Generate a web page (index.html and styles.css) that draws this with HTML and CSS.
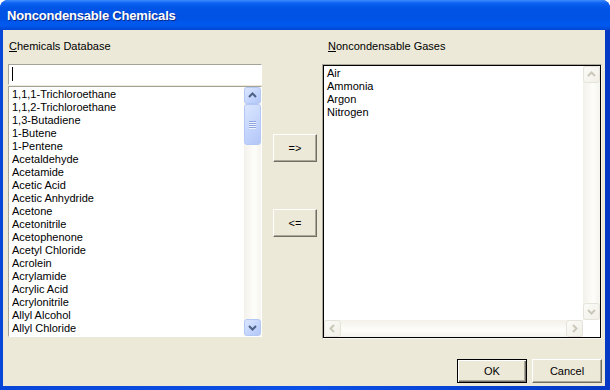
FILE: index.html
```html
<!DOCTYPE html>
<html lang="en">
<head>
    <meta charset="UTF-8" />
    <title>Noncondensable Chemicals</title>
    <link rel="stylesheet" href="styles.css">
</head>
<body>
    <div class="window">
        <div class="titlebar">
            <span class="title">Noncondensable Chemicals</span>
        </div>
        <div class="client">
            <div class="panes">
                <div class="pane left">
                    <div class="caption"><u>C</u>hemicals Database</div>
                    <div class="edit"><span class="caret"></span></div>
                    <div class="listbox">
                        <ul class="items">
                            <li>1,1,1-Trichloroethane</li>
                            <li>1,1,2-Trichloroethane</li>
                            <li>1,3-Butadiene</li>
                            <li>1-Butene</li>
                            <li>1-Pentene</li>
                            <li>Acetaldehyde</li>
                            <li>Acetamide</li>
                            <li>Acetic Acid</li>
                            <li>Acetic Anhydride</li>
                            <li>Acetone</li>
                            <li>Acetonitrile</li>
                            <li>Acetophenone</li>
                            <li>Acetyl Chloride</li>
                            <li>Acrolein</li>
                            <li>Acrylamide</li>
                            <li>Acrylic Acid</li>
                            <li>Acrylonitrile</li>
                            <li>Allyl Alcohol</li>
                            <li>Allyl Chloride</li>
                        </ul>
                        <div class="vscroll">
                            <div class="sbtn">
                                <svg width="15" height="15" viewBox="0 0 15 15"><path d="M4 9 L7.5 5.5 L11 9" /></svg>
                            </div>
                            <div class="sbtn thumb">
                                <span class="grip"></span>
                                <span class="grip"></span>
                                <span class="grip"></span>
                                <span class="grip"></span>
                            </div>
                            <div class="track"></div>
                            <div class="sbtn">
                                <svg width="15" height="15" viewBox="0 0 15 15"><path d="M4 6 L7.5 9.5 L11 6" /></svg>
                            </div>
                        </div>
                    </div>
                </div>
                <div class="movers">
                    <button class="btn">=&gt;</button>
                    <button class="btn">&lt;=</button>
                </div>
                <div class="pane right">
                    <div class="caption"><u>N</u>oncondensable Gases</div>
                    <div class="gasbox">
                        <div class="gasinner">
                            <ul class="items gases">
                                <li>Air</li>
                                <li>Ammonia</li>
                                <li>Argon</li>
                                <li>Nitrogen</li>
                            </ul>
                            <div class="vscroll off">
                                <div class="sbtn">
                                    <svg width="15" height="15" viewBox="0 0 15 15"><path d="M4 9 L7.5 5.5 L11 9" /></svg>
                                </div>
                                <div class="track"></div>
                                <div class="sbtn">
                                    <svg width="15" height="15" viewBox="0 0 15 15"><path d="M4 6 L7.5 9.5 L11 6" /></svg>
                                </div>
                            </div>
                            <div class="hscroll off">
                                <div class="sbtn">
                                    <svg width="15" height="15" viewBox="0 0 15 15"><path d="M9 4 L5.5 7.5 L9 11" /></svg>
                                </div>
                                <div class="track"></div>
                                <div class="sbtn">
                                    <svg width="15" height="15" viewBox="0 0 15 15"><path d="M6 4 L9.5 7.5 L6 11" /></svg>
                                </div>
                            </div>
                            <div class="corner"></div>
                        </div>
                    </div>
                </div>
            </div>
            <div class="actions">
                <button class="btn wide default">OK</button>
                <button class="btn wide">Cancel</button>
            </div>
        </div>
    </div>
</body>
</html>
```
FILE: styles.css
```css
body {
    margin: 0;
    background: #ffffff;
    font-family: "Liberation Sans", Arial, sans-serif;
    font-size: 11px;
    color: #000000;
}
.window {
    width: 610px;
    height: 390px;
    display: flex;
    flex-direction: column;
    background: linear-gradient(90deg, #0846d8, #0a4fe6 50%, #0339c4);
    border-radius: 8px 8px 0 0;
    overflow: hidden;
}
.titlebar {
    height: 30px;
    flex: none;
    box-sizing: border-box;
    padding: 8px 0 0 7px;
    background: linear-gradient(#3d8dff 0, #0d63f2 3px, #0054e6 8px, #0052e4 18px, #005af0 25px, #0046d2 30px);
}
.title {
    color: #ffffff;
    font-size: 13px;
    font-weight: bold;
    letter-spacing: -0.2px;
    line-height: 16px;
    text-shadow: 1px 1px 0 #0a2a8a;
}
.client {
    height: 356px;
    margin: 0 5px 0 3px;
    background: #ece9d8;
    box-sizing: border-box;
    padding: 9px 3px 0 5px;
    display: flex;
    flex-direction: column;
}
.panes {
    display: flex;
    height: 300px;
}
.pane {
    display: flex;
    flex-direction: column;
}
.left {
    width: 254px;
}
.right {
    width: 280px;
    margin-left: 5px;
}
.caption {
    height: 13px;
    line-height: 14px;
    padding-left: 1px;
    margin-bottom: 12px;
}
.right .caption {
    padding-left: 6px;
}
.edit {
    height: 21px;
    box-sizing: border-box;
    background: #ffffff;
    border: 1px solid;
    border-color: #a5a297 #ffffff #ffffff #a5a297;
    padding: 2px 0 0 3px;
}
.caret {
    display: block;
    width: 1px;
    height: 14px;
    background: #000000;
}
.listbox {
    margin-top: 1px;
    height: 251px;
    box-sizing: border-box;
    background: #ffffff;
    border: 1px solid;
    border-color: #a5a297 #ffffff #ffffff #a5a297;
    display: flex;
}
.items {
    list-style: none;
    margin: 0;
    padding: 1px 0 0 3px;
    flex: 1;
    overflow: hidden;
}
.items li {
    height: 13px;
    line-height: 13px;
    white-space: nowrap;
}
.vscroll {
    width: 17px;
    display: flex;
    flex-direction: column;
    background: linear-gradient(90deg, #f3f1ea, #fdfdfa 60%, #f5f4ee);
}
.hscroll {
    height: 17px;
    display: flex;
    background: linear-gradient(#f3f1ea, #fdfdfa 60%, #f5f4ee);
}
.track {
    flex: 1;
}
.sbtn {
    width: 17px;
    height: 17px;
    flex: none;
    box-sizing: border-box;
    border: 1px solid #b4c8f6;
    border-radius: 3px;
    background: linear-gradient(135deg, #dbe6fd, #c2d3fc 60%, #b3c6f6);
    display: flex;
    align-items: center;
    justify-content: center;
}
.sbtn svg path {
    fill: none;
    stroke: #4d6185;
    stroke-width: 2;
}
.thumb {
    height: 41px;
    flex-direction: column;
    gap: 1px;
}
.grip {
    display: block;
    width: 7px;
    height: 1px;
    background: #8ea5e0;
    box-shadow: 0 1px 0 #eef3ff;
}
.off .sbtn {
    border-color: #e6e4da;
    background: linear-gradient(135deg, #fbfbf8, #f1efe6);
}
.off .sbtn svg path {
    stroke: #cbc8ba;
}
.movers {
    width: 44px;
    margin-left: 11px;
    padding-top: 95px;
    display: flex;
    flex-direction: column;
    gap: 47px;
}
.btn {
    height: 28px;
    width: 44px;
    margin: 0;
    padding: 0;
    font-family: "Liberation Sans", Arial, sans-serif;
    font-size: 11px;
    color: #000000;
    background: #ece9d8;
    border: 1px solid;
    border-color: #ffffff #716f64 #716f64 #ffffff;
    box-shadow: inset -1px -1px 0 #aca899;
}
.gasbox {
    height: 275px;
    box-sizing: border-box;
    border: 1px solid;
    border-color: #aca899 #f7f6f0 #f7f6f0 #aca899;
}
.gasinner {
    height: 100%;
    box-sizing: border-box;
    border: 1px solid #000000;
    background: #ffffff;
    display: grid;
    grid-template-columns: 1fr 17px;
    grid-template-rows: 1fr 17px;
}
.gases {
    padding-left: 3px;
}
.corner {
    background: #ffffff;
}
.actions {
    display: flex;
    justify-content: flex-end;
    gap: 5px;
    margin-top: 20px;
}
.wide {
    width: 70px;
    height: 24px;
}
.default {
    border-color: #000000;
    box-shadow: inset 1px 1px 0 #ffffff, inset -1px -1px 0 #716f64, inset -2px -2px 0 #aca899;
}
```
